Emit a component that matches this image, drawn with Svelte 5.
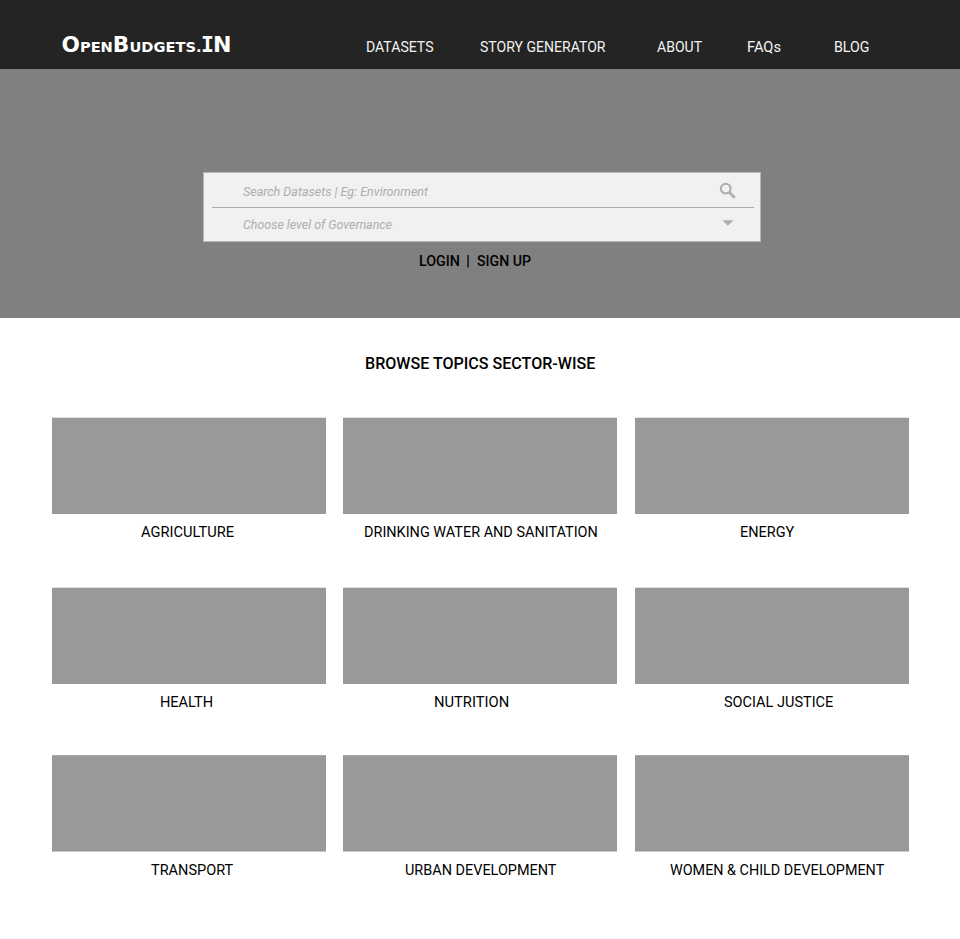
<script>
  // indent: distance from the left edge of the parent; width: set width of the label
  const nav = [
    { text: 'DATASETS', gap: 0, width: 67.5 },
    { text: 'STORY GENERATOR', gap: 46.5, width: 125.5 },
    { text: 'ABOUT', gap: 51, width: 45 },
    { text: 'FAQs', gap: 45, width: 34 },
    { text: 'BLOG', gap: 53, width: 35.5 }
  ];

  const rows = [
    [
      { text: 'AGRICULTURE', indent: 89, width: 93 },
      { text: 'DRINKING WATER AND SANITATION', indent: 20.6, width: 233.8 },
      { text: 'ENERGY', indent: 105.2, width: 54.3 }
    ],
    [
      { text: 'HEALTH', indent: 108.3, width: 53 },
      { text: 'NUTRITION', indent: 91, width: 75.2 },
      { text: 'SOCIAL JUSTICE', indent: 88.7, width: 109.3 }
    ],
    [
      { text: 'TRANSPORT', indent: 99, width: 82.2 },
      { text: 'URBAN DEVELOPMENT', indent: 61.6, width: 151.5 },
      { text: 'WOMEN & CHILD DEVELOPMENT', indent: 34.8, width: 214.2 }
    ]
  ];
</script>

{#snippet label(text, width)}
  <svg class="label" {width} height="22" role="img" aria-label={text}>
    <text x="0" y="16" textLength={width} lengthAdjust="spacingAndGlyphs">{text}</text>
  </svg>
{/snippet}

<div class="page">
  <header>
    <svg class="logo" width="174" height="24" role="img" aria-label="OpenBudgets.IN">
      <text x="0.5" y="18" textLength="140" lengthAdjust="spacingAndGlyphs"><tspan class="big">O</tspan>PEN<tspan class="big">B</tspan>UDGETS.</text>
      <text class="big serifed" x="140" y="18" textLength="13" lengthAdjust="spacingAndGlyphs">I</text>
      <text class="big" x="152" y="18" textLength="18.5" lengthAdjust="spacingAndGlyphs">N</text>
    </svg>
    <nav>
      {#each nav as item}
        <a href="#top" style:margin-left="{item.gap}px">{@render label(item.text, item.width)}</a>
      {/each}
    </nav>
  </header>

  <section class="hero">
    <div class="search">
      <div class="field first">
        {@render label('Search Datasets | Eg: Environment', 185)}
        <svg class="glass" width="18" height="18" viewBox="0 0 18 18">
          <circle cx="6.7" cy="6.6" r="4.9" fill="none" stroke="#adadad" stroke-width="2.1" />
          <path d="M10.2 10.2 L15.8 15.8" fill="none" stroke="#adadad" stroke-width="2.7" />
        </svg>
      </div>
      <div class="field second">
        {@render label('Choose level of Governance', 149)}
        <svg class="caret" width="12" height="6" viewBox="0 0 12 6"><path d="M0.3 0.2H11.5L5.9 5.8Z" fill="#adadad" /></svg>
      </div>
    </div>
    <div class="account">
      <a href="#top">{@render label('LOGIN', 41)}</a>
      <span class="divider">{@render label('|', 4)}</span>
      <a href="#top">{@render label('SIGN UP', 54)}</a>
    </div>
  </section>

  <main>
    <h1>{@render label('BROWSE TOPICS SECTOR-WISE', 230.3)}</h1>
    {#each rows as row}
      <div class="row">
        {#each row as topic}
          <article>
            <div class="tile"></div>
            <div class="caption" style:padding-left="{topic.indent}px">{@render label(topic.text, topic.width)}</div>
          </article>
        {/each}
      </div>
    {/each}
  </main>
</div>

<style>
  :global(body) { margin: 0; background: #fff; }
  .page { width: 960px; height: 939px; overflow: hidden; background: #fff; font: 15.5px Roboto, sans-serif; color: #000; }
  .label { display: block; overflow: visible; fill: currentColor; }
  a { color: inherit; text-decoration: none; }

  header { display: flex; align-items: flex-start; box-sizing: border-box; height: 69px; background: #242424; color: #f3f3f3; }
  .logo { flex: none; margin: 34px 0 0 61px; fill: #fff; overflow: visible; font: bold 14.2px 'DejaVu Sans', sans-serif; }
  .big { font-size: 21px; }
  .serifed { font-family: 'DejaVu Sans Mono', monospace; }
  nav { display: flex; margin: 36px 0 0 131px; }

  .hero { display: flow-root; height: 249px; background: #808080; }
  .search { box-sizing: border-box; width: 558px; height: 70px; margin: 103px 0 0 203px; background: #f1f1f1; border: 1px solid #b5b8b7; color: #adadad; font-size: 13px; font-style: italic; }
  .field { display: flex; justify-content: space-between; align-items: flex-start; box-sizing: border-box; margin: 0 6px 0 8px; padding-left: 31px; }
  .first { height: 35px; padding-top: 7px; border-bottom: 1px solid #adadad; }
  .second { height: 33px; padding-top: 5px; }
  .glass { margin: 2px 17px 0 0; }
  .caret { margin: 7px 20px 0 0; }
  .account { display: flex; margin: 8px 0 0 419px; font-size: 15px; font-weight: 500; }
  .divider { margin: 0 7px 0 6px; }

  main { padding: 35px 0 0 52px; }
  h1 { margin: 0 0 43px 313px; height: 22px; font-size: 16.5px; font-weight: 500; }
  .row { display: grid; grid-template-columns: 274px 275px 274px; column-gap: 17px; height: 167px; }
  .row:nth-of-type(1) { height: 170px; }
  .tile { width: 274px; height: 96px; background: #999; box-shadow: 0 -1px #e2e2e2; }
  .row:nth-of-type(3) .tile { height: 97px; box-sizing: border-box; border-top: 1px solid #a8a8a8; border-bottom: 1px solid #c6c6c6; box-shadow: none; }
  .caption { padding-top: 7px; }
</style>
